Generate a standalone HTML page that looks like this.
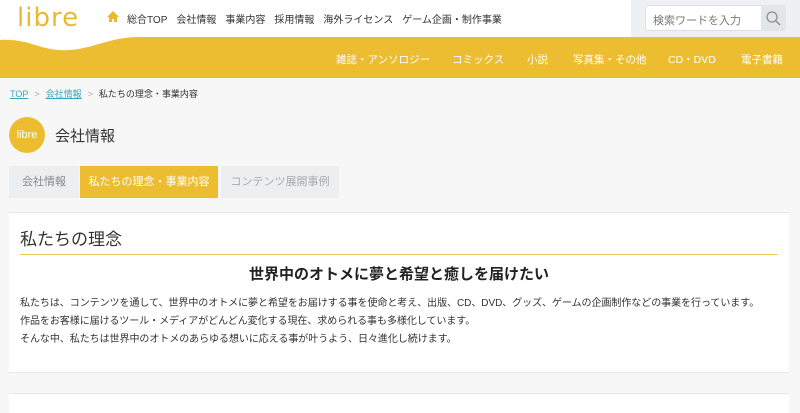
<!DOCTYPE html>
<html><head><meta charset="utf-8"><style>
*{margin:0;padding:0;box-sizing:border-box}
body{width:800px;height:407px;overflow:hidden;background:#f7f7f7;font-family:"Liberation Sans","Noto Sans CJK JP",sans-serif;color:#333;position:relative}
.hdr{position:absolute;left:0;top:0;width:800px;height:37px;background:#fff}
.logo{position:absolute;left:17px;top:3px;font-size:26px;color:#e9b934;letter-spacing:1px;font-family:"DejaVu Sans",sans-serif}
.topnav{position:absolute;left:108px;top:11px;font-size:10px;color:#333;white-space:nowrap}
.topnav span{margin-right:9px}
.srch{position:absolute;left:631px;top:0;width:169px;height:37px;background:#eef0f2}
.sbox{position:absolute;left:645px;top:5px;width:141px;height:26px;background:#fff;border:1px solid #dde;border-radius:3px;font-size:11px;color:#777;padding:6px 0 0 7px}
.sbtn{position:absolute;left:761px;top:5px;width:25px;height:26px;background:#e3e6e9;border-radius:0 3px 3px 0}
.band{position:absolute;left:0;top:37px;width:800px;height:41px;background:#ecbd30}
.mnav{position:absolute;top:52px;font-size:10.5px;color:#fff;white-space:nowrap}
.bc{position:absolute;left:10px;top:87px;font-size:9px;color:#333}
.bc a{color:#3aa4c0;text-decoration:underline}
.bc i{color:#aaa;font-style:normal;margin:0 6px}
.circ{position:absolute;left:9px;top:117px;width:36px;height:36px;border-radius:50%;background:#ecbd30;color:#fff;font-size:11px;text-align:center;line-height:36px}
.ttl{position:absolute;left:55px;top:125px;font-size:15px;color:#333}
.tab{position:absolute;top:166px;height:32px;font-size:11px;line-height:32px;text-align:center}
.box{position:absolute;left:9px;top:212px;width:780px;height:161px;background:#fff;border-top:1px solid #e6e6e6;border-bottom:1px solid #e6e6e6}
.box2{position:absolute;left:9px;top:393px;width:780px;height:20px;background:#fff;border-top:1px solid #e6e6e6}
.h2{position:absolute;left:11px;top:12px;font-size:17px;color:#333}
.ln{position:absolute;left:11px;top:41px;width:758px;height:1px;background:#ecc95a}
.h3{position:absolute;left:0;width:780px;top:50px;text-align:center;font-size:15px;font-weight:bold;color:#222}
.p{position:absolute;left:11px;font-size:10px;color:#333;white-space:nowrap;letter-spacing:-0.05px}
</style></head><body>
<div class="hdr"></div>
<div class="band"></div>
<svg style="position:absolute;left:0;top:30px" width="140" height="30"><path d="M0 10 C30 8 40 22 70 20 C95 18 110 7 140 7 L140 0 L0 0Z" fill="#fff"/></svg>
<div class="logo">libre</div>
<svg style="position:absolute;left:107px;top:11px" width="12" height="11"><path d="M6 0L0 6h2v5h3V8h2v3h3V6h2z" fill="#e9b934"/></svg>
<div class="topnav"><span style="margin-right:19px"></span><span>総合TOP</span><span>会社情報</span><span>事業内容</span><span>採用情報</span><span>海外ライセンス</span><span>ゲーム企画・制作事業</span></div>
<div class="srch"></div><div class="sbox">検索ワードを入力</div><div class="sbtn"><svg width="25" height="26"><circle cx="11" cy="12" r="5" fill="none" stroke="#8a9096" stroke-width="1.3"/><path d="M15 16l4 4" stroke="#8a9096" stroke-width="1.5"/></svg></div>
<div class="mnav" style="left:336px">雑誌・アンソロジー</div>
<div class="mnav" style="left:452px">コミックス</div>
<div class="mnav" style="left:527px">小説</div>
<div class="mnav" style="left:573px">写真集・その他</div>
<div class="mnav" style="left:668px">CD・DVD</div>
<div class="mnav" style="left:741px">電子書籍</div>
<div class="bc"><a>TOP</a><i>&gt;</i><a>会社情報</a><i>&gt;</i>私たちの理念・事業内容</div>
<div class="circ">libre</div>
<div class="ttl">会社情報</div>
<div class="tab" style="left:9px;width:70px;background:#eceef0;color:#888">会社情報</div>
<div class="tab" style="left:80px;width:138px;background:#ecbd30;color:#fff">私たちの理念・事業内容</div>
<div class="tab" style="left:221px;width:118px;background:#eceef0;color:#aaa">コンテンツ展開事例</div>
<div class="box">
<div class="h2">私たちの理念</div>
<div class="ln"></div>
<div class="h3">世界中のオトメに夢と希望と癒しを届けたい</div>
<div class="p" style="top:81px">私たちは、コンテンツを通して、世界中のオトメに夢と希望をお届けする事を使命と考え、出版、CD、DVD、グッズ、ゲームの企画制作などの事業を行っています。</div>
<div class="p" style="top:99px">作品をお客様に届けるツール・メディアがどんどん変化する現在、求められる事も多様化しています。</div>
<div class="p" style="top:117px">そんな中、私たちは世界中のオトメのあらゆる想いに応える事が叶うよう、日々進化し続けます。</div>
</div>
<div class="box2"></div>
</body></html>
